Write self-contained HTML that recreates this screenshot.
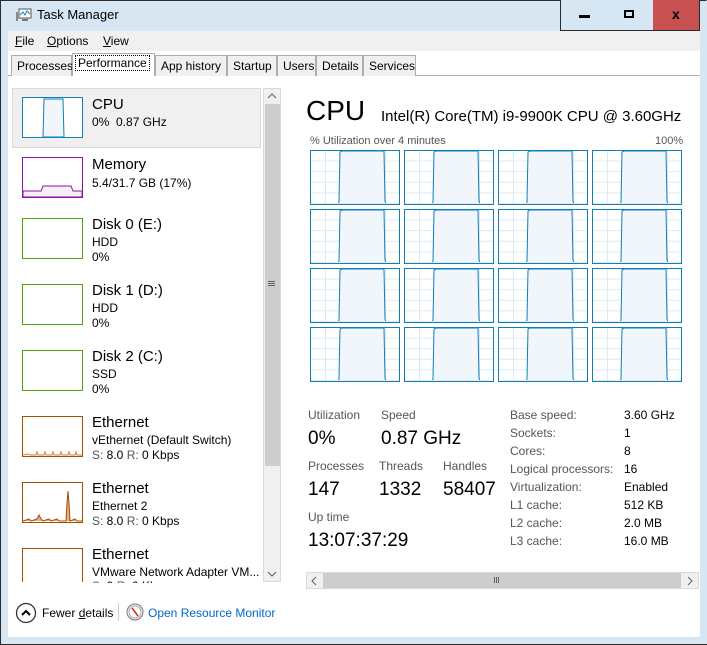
<!DOCTYPE html>
<html><head><meta charset="utf-8"><style>
*{margin:0;padding:0;box-sizing:border-box}
body{width:707px;height:645px;overflow:hidden;background:#d6e7f3;font-family:"Segoe UI","Liberation Sans",sans-serif;font-size:12px;color:#000;position:relative}
.a{position:absolute;white-space:nowrap}
#frame{position:absolute;left:0;top:0;width:707px;height:645px;border:1px solid #2b2b2b;border-right-color:#d6e7f3;}
.btn{position:absolute;top:0;height:31px;border:1px solid #2b2b2b;border-top:0;background:#d6e7f3}
.tab{position:absolute;top:55px;height:21px;background:#f0f0f0;border:1px solid #adadad;border-bottom:0;font-size:12px;padding:3px 0 0 5px}
.th{position:absolute;left:22px;width:61px;height:41px;border:1px solid}
.t1{position:absolute;left:92px;font-size:15px}
.t2{position:absolute;left:92px;font-size:12px}
.g{position:absolute;width:90px;height:55px;border:1.5px solid #117dbb;background-color:#fff;
background-image:linear-gradient(#d9eaf4 1px,transparent 1px),linear-gradient(90deg,#d9eaf4 1px,transparent 1px);background-size:15px 10.6px;background-position:-1px -1px}
.g svg{position:absolute;left:0;top:0}
.lb{color:#555;font-size:12px}
.big{font-size:19px}
</style></head><body>
<div id="frame"></div>
<svg class="a" style="left:16px;top:8px" width="16" height="15" viewBox="0 0 16 15"><rect x="3" y="1" width="12" height="9" fill="#fff" stroke="#555"/><polyline points="4,7 7,4 9,7 11,3 14,6" fill="none" stroke="#1a7fc1"/><rect x="0" y="4" width="2" height="9" fill="#888"/><rect x="6" y="11" width="6" height="2" fill="#777"/></svg>
<div class="a" style="left:37px;top:7px;font-size:13px">Task Manager</div>
<div class="btn" style="left:560px;width:48px"><div class="a" style="left:18px;top:15px;width:11px;height:3px;background:#000"></div></div>
<div class="btn" style="left:607px;width:47px;border-left:0"><div class="a" style="left:17px;top:10px;width:10px;height:8px;border:2px solid #000"></div></div>
<div class="btn" style="left:653px;width:47px;border-left:0;background:#c75050"><div class="a" style="left:19px;top:6px;font-weight:bold;font-size:14px;font-family:'Liberation Sans'">x</div></div>
<div class="a" style="left:8px;top:31px;width:692px;height:20px;background:#f0f0f0"></div>
<div class="a" style="left:15px;top:34px;font-size:12px"><u>F</u>ile</div>
<div class="a" style="left:47px;top:34px;font-size:12px"><u>O</u>ptions</div>
<div class="a" style="left:103px;top:34px;font-size:12px"><u>V</u>iew</div>
<div class="a" style="left:8px;top:51px;width:692px;height:586px;background:#fff"></div>
<div class="a" style="left:8px;top:75px;width:692px;height:1px;background:#adadad"></div>
<div class="tab" style="left:11px;width:61px">Processes</div>
<div class="tab" style="left:72px;top:53px;width:83px;height:23px;background:#fff;border-color:#adadad;padding:2px 0 0 3px"><span style="outline:1px dotted #000;padding:0 2px">Performance</span></div>
<div class="tab" style="left:155px;width:72px">App history</div>
<div class="tab" style="left:227px;width:50px">Startup</div>
<div class="tab" style="left:277px;width:39px">Users</div>
<div class="tab" style="left:316px;width:47px">Details</div>
<div class="tab" style="left:363px;width:53px">Services</div>
<div class="a" style="left:12px;top:88px;width:249px;height:60px;background:#f0f0f0;border:1px solid #dadada"></div>
<div class="th" style="top:97px;border-color:#117dbb;background:#fff"><svg width="59" height="39" viewBox="0 0 59 39"><path d="M20,39 L21,1 L40,1 L41,39 Z" fill="#f1f6fa" stroke="#117dbb" stroke-width="1"/></svg></div>
<div class="t1" style="top:96px">CPU</div><div class="t2" style="top:115px">0%&nbsp; 0.87 GHz</div>
<div class="th" style="top:157px;border-color:#8b12ae"><svg width="59" height="39" viewBox="0 0 59 39"><path d="M0,33 L18,33 L20,28 L48,28 L50,33 L59,33 L59,39 L0,39Z" fill="#f4eef7" stroke="#8b12ae" stroke-width="1"/></svg></div>
<div class="t1" style="top:156px">Memory</div><div class="t2" style="top:176px">5.4/31.7 GB (17%)</div>
<div class="th" style="top:218px;border-color:#4da60c"></div>
<div class="t1" style="top:216px">Disk 0 (E:)</div><div class="t2" style="top:235px">HDD</div><div class="t2" style="top:250px">0%</div>
<div class="th" style="top:284px;border-color:#4da60c"></div>
<div class="t1" style="top:282px">Disk 1 (D:)</div><div class="t2" style="top:301px">HDD</div><div class="t2" style="top:316px">0%</div>
<div class="th" style="top:350px;border-color:#4da60c"></div>
<div class="t1" style="top:348px">Disk 2 (C:)</div><div class="t2" style="top:367px">SSD</div><div class="t2" style="top:382px">0%</div>
<div class="th" style="top:416px;border-color:#a74f01"><svg width="59" height="39"><path d="M0,38 L5,37 L7,38 L13,38 L14,35 L15,38 L21,38 L22,35 L23,38 L29,38 L30,35 L31,38 L37,38 L38,35 L39,38 L45,38 L46,35 L47,38 L52,38 L53,35 L54,38 L59,38" fill="none" stroke="#d08040"/></svg></div>
<div class="t1" style="top:414px">Ethernet</div><div class="t2" style="top:433px">vEthernet (Default Switch)</div><div class="t2" style="top:448px"><span class="lb">S:</span> 8.0 <span class="lb">R:</span> 0 Kbps</div>
<div class="th" style="top:482px;border-color:#a74f01"><svg width="59" height="39"><path d="M0,38 L6,36 L8,38 L14,36 L16,32 L18,36 L20,38 L26,36 L28,38 L34,36 L36,38 L43,38 L44,20 L45,8 L46,20 L47,38 L52,36 L54,38 L59,38" fill="#e8b080" stroke="#a74f01"/></svg></div>
<div class="t1" style="top:480px">Ethernet</div><div class="t2" style="top:499px">Ethernet 2</div><div class="t2" style="top:514px"><span class="lb">S:</span> 8.0 <span class="lb">R:</span> 0 Kbps</div>
<div class="th" style="top:548px;height:34px;border-bottom:0;border-color:#a74f01"></div>
<div class="t1" style="top:546px">Ethernet</div><div class="t2" style="top:565px">VMware Network Adapter VM...</div>
<div class="t2" style="top:580px;height:3px;overflow:hidden;line-height:12px"><span class="lb">S:</span> 0 <span class="lb">R:</span> 0 Kbps</div>
<div class="a" style="left:8px;top:583px;width:255px;height:14px;background:#fff"></div>
<div class="a" style="left:263px;top:88px;width:18px;height:494px;background:#f0f0f0;border:1px solid #dadada"></div>
<div class="a" style="left:265px;top:104px;width:15px;height:362px;background:#cdcdcd"></div>
<svg class="a" style="left:267px;top:92px" width="10" height="8"><polyline points="1,6 5,2 9,6" fill="none" stroke="#606060"/></svg>
<svg class="a" style="left:267px;top:570px" width="10" height="8"><polyline points="1,2 5,6 9,2" fill="none" stroke="#606060"/></svg>
<div class="a" style="left:268px;top:281px;width:7px;height:1px;background:#606060;box-shadow:0 2px 0 #606060,0 4px 0 #606060"></div>
<div class="a" style="left:306px;top:95px;font-size:28px">CPU</div>
<div class="a" style="left:381px;top:108px;font-size:15px">Intel(R) Core(TM) i9-9900K CPU @ 3.60GHz</div>
<div class="a lb" style="left:310px;top:135px;font-size:11px">% Utilization over 4 minutes</div>
<div class="a lb" style="left:655px;top:135px;font-size:11px">100%</div>
<svg width="0" height="0" style="position:absolute"><defs><path id="cp" d="M27,53 L28,51 L29,1 L31,0 L73,0 L74,50 L75,53 Z" fill="#f1f6fa" stroke="#117dbb" stroke-width="1"/></defs></svg>
<div class="g" style="left:310px;top:150px"><svg width="87" height="52"><use href="#cp"/></svg></div>
<div class="g" style="left:404px;top:150px"><svg width="87" height="52"><use href="#cp"/></svg></div>
<div class="g" style="left:498px;top:150px"><svg width="87" height="52"><use href="#cp"/></svg></div>
<div class="g" style="left:592px;top:150px"><svg width="87" height="52"><use href="#cp"/></svg></div>
<div class="g" style="left:310px;top:209px"><svg width="87" height="52"><use href="#cp"/></svg></div>
<div class="g" style="left:404px;top:209px"><svg width="87" height="52"><use href="#cp"/></svg></div>
<div class="g" style="left:498px;top:209px"><svg width="87" height="52"><use href="#cp"/></svg></div>
<div class="g" style="left:592px;top:209px"><svg width="87" height="52"><use href="#cp"/></svg></div>
<div class="g" style="left:310px;top:268px"><svg width="87" height="52"><use href="#cp"/></svg></div>
<div class="g" style="left:404px;top:268px"><svg width="87" height="52"><use href="#cp"/></svg></div>
<div class="g" style="left:498px;top:268px"><svg width="87" height="52"><use href="#cp"/></svg></div>
<div class="g" style="left:592px;top:268px"><svg width="87" height="52"><use href="#cp"/></svg></div>
<div class="g" style="left:310px;top:327px"><svg width="87" height="52"><use href="#cp"/></svg></div>
<div class="g" style="left:404px;top:327px"><svg width="87" height="52"><use href="#cp"/></svg></div>
<div class="g" style="left:498px;top:327px"><svg width="87" height="52"><use href="#cp"/></svg></div>
<div class="g" style="left:592px;top:327px"><svg width="87" height="52"><use href="#cp"/></svg></div>
<div class="a lb" style="left:308px;top:408px">Utilization</div>
<div class="a lb" style="left:381px;top:408px">Speed</div>
<div class="a big" style="left:308px;top:428px">0%</div>
<div class="a big" style="left:381px;top:428px">0.87 GHz</div>
<div class="a lb" style="left:308px;top:459px">Processes</div>
<div class="a lb" style="left:379px;top:459px">Threads</div>
<div class="a lb" style="left:443px;top:459px">Handles</div>
<div class="a big" style="left:308px;top:479px">147</div>
<div class="a big" style="left:379px;top:479px">1332</div>
<div class="a big" style="left:443px;top:479px">58407</div>
<div class="a lb" style="left:308px;top:510px">Up time</div>
<div class="a big" style="left:308px;top:530px">13:07:37:29</div>
<div class="a lb" style="left:510px;top:406px;line-height:18px">Base speed:<br>Sockets:<br>Cores:<br>Logical processors:<br>Virtualization:<br>L1 cache:<br>L2 cache:<br>L3 cache:</div>
<div class="a" style="left:624px;top:406px;line-height:18px">3.60 GHz<br>1<br>8<br>16<br>Enabled<br>512 KB<br>2.0 MB<br>16.0 MB</div>
<div class="a" style="left:306px;top:572px;width:393px;height:17px;background:#f0f0f0;border:1px solid #dadada"></div>
<div class="a" style="left:323px;top:573px;width:358px;height:15px;background:#cdcdcd"></div>
<svg class="a" style="left:310px;top:576px" width="8" height="10"><polyline points="6,1 2,5 6,9" fill="none" stroke="#606060"/></svg>
<svg class="a" style="left:686px;top:576px" width="8" height="10"><polyline points="2,1 6,5 2,9" fill="none" stroke="#606060"/></svg>
<div class="a" style="left:494px;top:577px;width:1px;height:6px;background:#606060;box-shadow:2px 0 0 #606060,4px 0 0 #606060"></div>
<svg class="a" style="left:15px;top:602px" width="22" height="22"><circle cx="11" cy="11" r="9.5" fill="#fff" stroke="#333" stroke-width="1.3"/><polyline points="7,13 11,9 15,13" fill="none" stroke="#000" stroke-width="2"/></svg>
<div class="a" style="left:42px;top:606px">Fewer <u>d</u>etails</div>
<div class="a" style="left:118px;top:603px;width:1px;height:18px;background:#ccc"></div>
<svg class="a" style="left:126px;top:603px" width="18" height="18"><circle cx="9" cy="9" r="8" fill="#eee" stroke="#777"/><circle cx="9" cy="9" r="6" fill="#fff" stroke="#aaa"/><line x1="6" y1="5" x2="12" y2="13" stroke="#d22" stroke-width="1.5"/></svg>
<div class="a" style="left:148px;top:606px;color:#0066cc">Open Resource Monitor</div>
<div class="a" style="left:0;top:644px;width:707px;height:1px;background:#2b2b2b"></div>
</body></html>
